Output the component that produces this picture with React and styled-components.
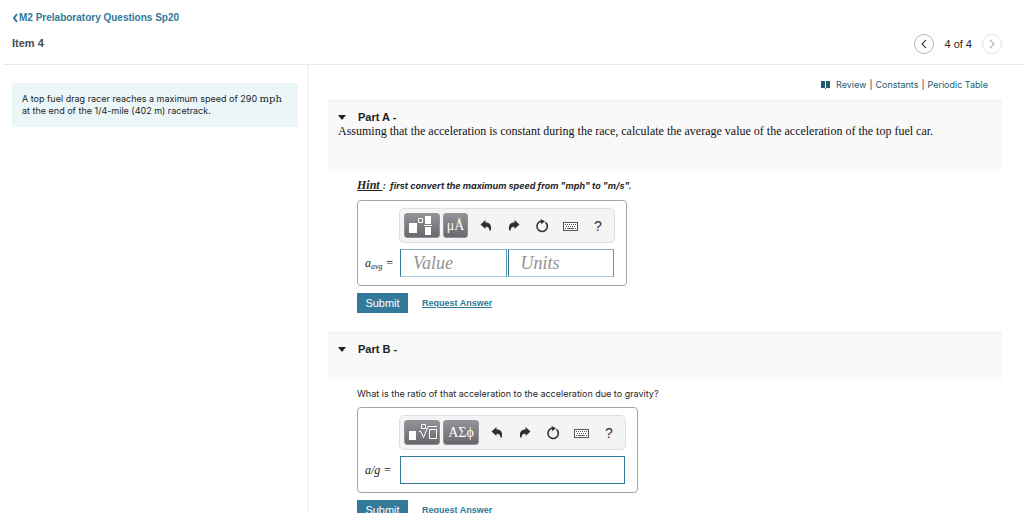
import React from "react";
import styled, { createGlobalStyle } from "styled-components";

const sans = '"Liberation Sans", Arial, sans-serif';
const text = 'Inter, "Liberation Sans", sans-serif';
const serif = '"Liberation Serif", "Times New Roman", serif';
const math = '"DejaVu Serif", "Liberation Serif", serif';

const Global = createGlobalStyle`
  *, *::before, *::after { box-sizing: border-box; }
  body { margin: 0; background: #fff; color: #252525; font: 9px/12px ${text}; }
  h1, h2, p { margin: 0; }
  button, input { font-family: inherit; }
`;

const Page = styled.div`
  display: flex;
  flex-direction: column;
  height: 100vh;
`;

const Header = styled.header`
  display: flex;
  justify-content: space-between;
  align-items: flex-end;
  flex: none;
  height: 65px;
  margin-left: 3px;
  padding: 11px 22px 10px 9px;
  border-bottom: 1px solid #e9e9ec;
  font-family: ${sans};
`;

const Heading = styled.div`
  display: flex;
  flex-direction: column;
  gap: 11px;
  align-self: flex-start;
`;

const BackLink = styled.a`
  display: flex;
  align-items: center;
  gap: 1px;
  color: #2f7a9a;
  font-size: 10px;
  line-height: 14px;
  font-weight: bold;
  text-decoration: none;
`;

const ItemTitle = styled.h1`
  color: #4a4a4a;
  font-size: 11px;
  line-height: 14px;
`;

const Pager = styled.nav`
  display: flex;
  align-items: center;
  gap: 10px;
  font-size: 11px;
  line-height: 14px;
`;

const PagerButton = styled.button`
  display: grid;
  place-items: center;
  width: 20px;
  height: 20px;
  padding: 0;
  border: 1px solid ${(p) => (p.disabled ? "#e2e2e2" : "#b5b5b5")};
  border-radius: 50%;
  background: #fff;
  color: ${(p) => (p.disabled ? "#b5b5b5" : "#444")};
`;

const Body = styled.div`
  display: flex;
  flex: 1;
  min-height: 0;
`;

const Aside = styled.aside`
  flex: 0 0 309px;
  padding: 18px 9px 0 12px;
  border-right: 2px solid #f3f2f8;
`;

const Problem = styled.p`
  min-height: 44px;
  padding: 10px;
  background: #eaf6f8;
`;

const Unit = styled.span`
  font-family: ${math};
  font-size: 10px;
  line-height: 10px;
`;

const Main = styled.main`
  flex: 1;
  min-width: 0;
  padding: 13px 22px 0 19px;
  overflow: hidden auto;
  scrollbar-width: none;
`;

const Tools = styled.nav`
  display: flex;
  justify-content: flex-end;
  align-items: center;
  gap: 3px;
  padding: 0 14px 8px 0;
  line-height: 14px;
  svg { margin-right: 3px; }
`;

const ToolLink = styled.a`
  color: #235a70;
  text-decoration: none;
`;

const PartHeader = styled.header`
  min-height: ${(p) => (p.$tall ? 71 : 48)}px;
  padding: 9px 10px;
  border-top: 1px solid #f2f2f2;
  background: #f9f9f9;
`;

const PartTitle = styled.h2`
  font-family: ${sans};
  font-size: 11px;
  line-height: 14px;
`;

const Toggle = styled.button`
  display: flex;
  align-items: center;
  gap: 12px;
  padding: 0;
  border: 0;
  background: none;
  color: #222;
  font: inherit;
`;

const Statement = styled.p`
  color: #111;
  font: 12px/14px ${serif};
`;

const Content = styled.div`
  padding: 7px 0 19px 29px;
`;

const Hint = styled.p`
  margin-bottom: 6px;
  font-weight: bold;
  font-style: italic;
  line-height: 16px;
  white-space: pre;
  u { font-family: ${serif}; font-size: 12px; line-height: 14px; }
`;

const Question = styled.p`
  margin-bottom: 6px;
  line-height: 14px;
`;

const Answer = styled.form`
  display: flex;
  flex-direction: column;
  align-items: flex-start;
  gap: 7px;
`;

const Editor = styled.div`
  display: grid;
  grid-template-columns: 34px ${(p) => (p.$wide ? 227 : 216)}px;
  row-gap: 6px;
  align-items: center;
  padding: 7px 11px 8px 7px;
  border: 1px solid #a5a5a5;
  border-radius: 4px;
`;

const Toolbar = styled.div`
  grid-column: 2;
  display: flex;
  align-items: center;
  height: 35px;
  padding: 0 4px;
  border: 1px solid #dedede;
  border-radius: 5px;
  background: #f4f4f4;
`;

const Key = styled.button`
  display: grid;
  place-items: center;
  width: ${(p) => (p.$narrow ? 25 : 36)}px;
  height: 25px;
  margin-right: 3px;
  padding: 0;
  border: 1px solid #929298;
  border-radius: 3px;
  background: linear-gradient(#919197, #69696d);
  color: #fff;
  font: 14px/16px ${serif};
`;

const Actions = styled.div`
  display: flex;
  gap: 10px;
  padding-left: 6px;
`;

const Action = styled.button`
  display: grid;
  place-items: center;
  width: 18px;
  height: 18px;
  padding: 0;
  border: 0;
  background: none;
  color: #303030;
  font: 14px/16px ${sans};
`;

const Label = styled.label`
  font: italic 12px/14px ${serif};
  white-space: nowrap;
  sub { font-size: 8px; line-height: 0; vertical-align: -2px; }
`;

const Fields = styled.div`
  display: flex;
  gap: 1px;
  padding: 0 1px;
`;

const Field = styled.input`
  flex: 1;
  min-width: 0;
  height: 28px;
  padding: 0 12px;
  border: 1px solid #33799a;
  border-color: ${(p) => (p.$split ? "#8ab5c7 #5b9ab3 #a9cbd8 #33799a" : "#33799a")};
  border-radius: 0;
  background: #fff;
  color: #222;
  font: italic 18px/20px ${serif};
  &::placeholder { color: #929292; opacity: 1; }
`;

const SubmitRow = styled.div`
  display: flex;
  align-items: center;
  gap: 14px;
  font-family: ${sans};
`;

const Submit = styled.button`
  width: 51px;
  height: 20px;
  padding: 0;
  border: 0;
  background: #33799a;
  color: #fff;
  font-size: 11px;
`;

const RequestLink = styled.a`
  color: #2f7a9a;
  font-size: 9px;
  font-weight: bold;
`;

const Chevron = ({ right, size = 10, weight = 1.2 }) => (
  <svg width={size} height="10" viewBox={`0 0 ${size} 10`} fill="none" stroke="currentColor" strokeWidth={weight} aria-hidden="true">
    <path d={right ? "M3 1l4 4-4 4" : size === 10 ? "M7 1L3 5l4 4" : "M5 1L2 5l3 4"} />
  </svg>
);

const Undo = ({ flip }) => (
  <svg width="12" height="12" viewBox="0 0 12 12" fill="currentColor" aria-hidden="true">
    <path transform={flip ? "translate(12 0) scale(-1 1)" : undefined} d="M5.500 0v2.500C9.500 2.400 12 5 10.800 10.500H9.300C9.500 8 8.500 6.800 5.500 6.800V9L.5 4.600z" />
  </svg>
);

const Reset = () => (
  <svg width="14" height="14" viewBox="0 0 14 14" aria-hidden="true">
    <path d="M10.500 3.300A5.200 5.200 0 1 1 6 2.200" fill="none" stroke="currentColor" strokeWidth="1.600" />
    <path d="M5.500 0l4.500 2.300-3.700 3z" fill="currentColor" />
  </svg>
);

const Keyboard = () => (
  <svg width="15" height="10" viewBox="0 0 15 10" fill="none" stroke="#555" aria-hidden="true">
    <rect x=".5" y="1.500" width="14" height="8" fill="#fff" />
    <path d="M2 3.500h11M3 5.500h10" strokeDasharray="1 1" />
    <path d="M2 7.500h1M4 7.500h7M12 7.500h1" />
  </svg>
);

const Templates = () => (
  <svg width="30" height="20" viewBox="0 0 30 20" aria-hidden="true">
    <path fill="#fff" d="M2 7h8v10H2zM18 0h6v8h-6zM18 11h6v8h-6zM17 9h8v1h-8z" />
    <path fill="none" stroke="#fff" d="M11.500 2.500h4v4h-4z" />
  </svg>
);

const Roots = () => (
  <svg width="30" height="20" viewBox="0 0 30 20" aria-hidden="true">
    <path fill="#fff" d="M2 8h7v9H2z" />
    <path fill="none" stroke="#fff" d="M14.500 1.500h4v4h-4zM12 8.500h2l2.500 6L21 3.500h9M22.500 6.500h7v9h-7z" />
  </svg>
);

const Book = () => (
  <svg width="9" height="8" viewBox="0 0 9 8" fill="#235a70" aria-hidden="true">
    <path d="M0 0h4v7H0zM5 0h4v7H5zM4 7h1v1H4z" />
  </svg>
);

function EditorActions() {
  return (
    <Actions>
      <Action type="button" aria-label="Undo"><Undo /></Action>
      <Action type="button" aria-label="Redo"><Undo flip /></Action>
      <Action type="button" aria-label="Reset"><Reset /></Action>
      <Action type="button" aria-label="Keyboard shortcuts"><Keyboard /></Action>
      <Action type="button">?</Action>
    </Actions>
  );
}

function PartTop({ name, tall, children }) {
  return (
    <PartHeader $tall={tall}>
      <PartTitle>
        <Toggle type="button" aria-expanded="true">
          <svg width="8" height="5" viewBox="0 0 8 5" fill="currentColor" aria-hidden="true"><path d="M0 0h8L4 5z" /></svg>
          {name} -
        </Toggle>
      </PartTitle>
      {children}
    </PartHeader>
  );
}

function SubmitBar() {
  return (
    <SubmitRow>
      <Submit type="submit">Submit</Submit>
      <RequestLink href="#request">Request Answer</RequestLink>
    </SubmitRow>
  );
}

const hold = (e) => e.preventDefault();

export default function App() {
  return (
    <Page>
      <Global />
      <Header>
        <Heading>
          <BackLink href="#assignment"><Chevron size={6} weight={2} />M2 Prelaboratory Questions Sp20</BackLink>
          <ItemTitle>Item 4</ItemTitle>
        </Heading>
        <Pager aria-label="Items">
          <PagerButton aria-label="Previous item"><Chevron /></PagerButton>
          <span>4 of 4</span>
          <PagerButton aria-label="Next item" disabled><Chevron right /></PagerButton>
        </Pager>
      </Header>
      <Body>
        <Aside>
          <Problem>
            A top fuel drag racer reaches a maximum speed of 290 <Unit>mph</Unit> at the end of the 1/4-mile (402 m) racetrack.
          </Problem>
        </Aside>
        <Main>
          <Tools aria-label="Resources">
            <Book />
            <ToolLink href="#review">Review</ToolLink>|
            <ToolLink href="#constants">Constants</ToolLink>|
            <ToolLink href="#table">Periodic Table</ToolLink>
          </Tools>
          <section>
            <PartTop name="Part A" tall>
              <Statement>Assuming that the acceleration is constant during the race, calculate the average value of the acceleration of the top fuel car.</Statement>
            </PartTop>
            <Content>
              <Hint><u>Hint </u>:  first convert the maximum speed from "mph" to "m/s".</Hint>
              <Answer onSubmit={hold}>
                <Editor>
                  <Toolbar>
                    <Key type="button" aria-label="Templates"><Templates /></Key>
                    <Key type="button" $narrow>μÅ</Key>
                    <EditorActions />
                  </Toolbar>
                  <Label htmlFor="value">a<sub>avg</sub> =</Label>
                  <Fields>
                    <Field id="value" placeholder="Value" $split />
                    <Field aria-label="Units" placeholder="Units" $split />
                  </Fields>
                </Editor>
                <SubmitBar />
              </Answer>
            </Content>
          </section>
          <section>
            <PartTop name="Part B" />
            <Content>
              <Question>What is the ratio of that acceleration to the acceleration due to gravity?</Question>
              <Answer onSubmit={hold}>
                <Editor $wide>
                  <Toolbar>
                    <Key type="button" aria-label="Templates"><Roots /></Key>
                    <Key type="button">ΑΣϕ</Key>
                    <EditorActions />
                  </Toolbar>
                  <Label htmlFor="ratio">a/g =</Label>
                  <Fields>
                    <Field id="ratio" />
                  </Fields>
                </Editor>
                <SubmitBar />
              </Answer>
            </Content>
          </section>
        </Main>
      </Body>
    </Page>
  );
}
